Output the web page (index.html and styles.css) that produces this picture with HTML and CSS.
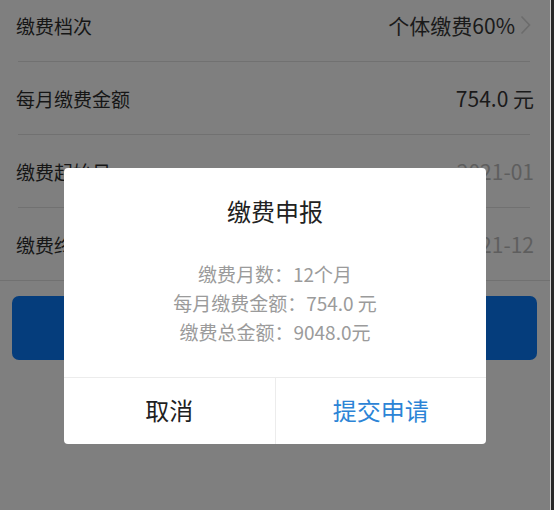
FILE: index.html
```html
<!DOCTYPE html>
<html lang="zh-CN">
<head>
    <meta charset="UTF-8">
    <meta name="viewport" content="width=device-width, initial-scale=1.0">
    <title>缴费申报</title>
    <link rel="stylesheet" href="styles.css">
</head>
<body>

<div class="screen">
    <div class="list">
        <div class="row">
            <span class="label">缴费档次</span>
            <span class="value">个体缴费60%
                <svg class="chevron" width="11" height="20" viewBox="0 0 11 20"><path d="M1.5 1.5 L9.5 10 L1.5 18.5" fill="none" stroke="#6c6c6c" stroke-width="1.6"/></svg>
            </span>
        </div>
        <div class="row">
            <span class="label">每月缴费金额</span>
            <span class="value">754.0 元</span>
        </div>
        <div class="row">
            <span class="label">缴费起始日</span>
            <span class="value date">2021-01</span>
        </div>
        <div class="row last">
            <span class="label">缴费终止日</span>
            <span class="value date">2021-12</span>
        </div>
    </div>

    <div class="submit-btn"></div>

    <!-- 弹窗 -->
    <div class="dialog">
        <h3 class="dialog-title">缴费申报</h3>
        <div class="dialog-body">
            <p>缴费月数：12个月</p>
            <p>每月缴费金额：754.0 元</p>
            <p>缴费总金额：9048.0元</p>
        </div>
        <div class="dialog-footer">
            <div class="btn-cancel">取消</div>
            <div class="btn-ok">提交申请</div>
        </div>
    </div>
</div>

</body>
</html>
```

FILE: styles.css
```css
body {
    margin: 0;
    background-color: #2a2a2a;
    font-family: "Noto Sans CJK SC", "Noto Sans", sans-serif;
}
.screen {
    position: relative;
    width: 550px;
    height: 510px;
    overflow: hidden;
    background-color: #7f7f7f;
    border-right: 1px solid #cfcfcf;
}
.list {
    margin-top: -11px;
}
.row {
    position: relative;
    height: 72px;
    display: flex;
    align-items: center;
    justify-content: space-between;
    padding: 0 16px 0 16px;
    border-bottom: 1px solid transparent;
}
.row::after {
    content: "";
    position: absolute;
    left: 18px;
    right: 20px;
    bottom: -1px;
    height: 1px;
    background-color: #717171;
}
.row.last::after {
    left: 0;
    right: 0;
}
.label {
    font-size: 19px;
    color: #161616;
}
.value {
    display: flex;
    align-items: center;
    font-size: 21px;
    color: #1a1a1a;
}
.value.date {
    color: #5e5e5e;
}
.chevron {
    margin-left: 5px;
    margin-right: 3px;
}
.submit-btn {
    width: 525px;
    height: 64px;
    margin: 15px 0 0 12px;
    border-radius: 7px;
    background-color: #053d7c;
}
.dialog {
    position: absolute;
    left: 64px;
    top: 168px;
    width: 422px;
    background: #fff;
    border-radius: 4px;
    text-align: center;
}
.dialog-title {
    margin: 27px 0 0;
    font-size: 24px;
    line-height: 32px;
    font-weight: normal;
    color: #222;
}
.dialog-body {
    padding: 32px 0 31px;
    font-size: 19px;
    line-height: 29px;
    color: #9b9b9b;
}
.dialog-body p {
    margin: 0;
}
.dialog-footer {
    display: flex;
    border-top: 1px solid #ececec;
}
.dialog-footer div {
    flex: 1;
    height: 66px;
    line-height: 64px;
    font-size: 24px;
}
.btn-cancel {
    color: #1f1f1f;
    border-right: 1px solid #ececec;
}
.btn-ok {
    color: #2c84d6;
}
```
